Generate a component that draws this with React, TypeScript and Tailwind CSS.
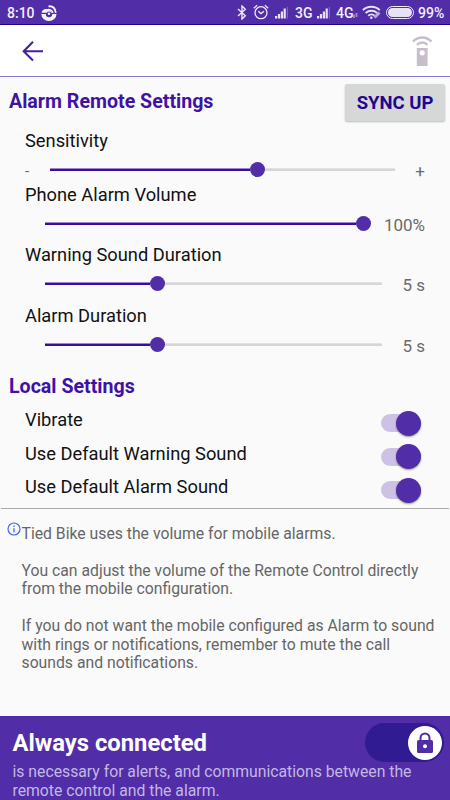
const sliders = [
  { label: 'Sensitivity', percent: 60, min: '-', value: '+', box: 'h-[26px]', track: 'ml-[50px] w-[345px]' },
  { label: 'Phone Alarm Volume', percent: 94.6, value: '100%', box: 'h-[32px]', track: 'ml-[45px] w-[337px]', full: true },
  { label: 'Warning Sound Duration', percent: 33.3, value: '5 s', box: 'h-[33px]', track: 'ml-[45px] w-[337px]' },
  { label: 'Alarm Duration', percent: 33.3, value: '5 s', box: 'h-[31px]', track: 'ml-[45px] w-[337px]' }
];

const toggles = ['Vibrate', 'Use Default Warning Sound', 'Use Default Alarm Sound'];

function SignalIcon() {
  return (
    <svg width="13" height="12" viewBox="0 0 13 12" fill="#e9e2f6">
      <rect x="0" y="9" width="2.2" height="2.5" />
      <rect x="2.9" y="7" width="2.2" height="4.5" />
      <rect x="5.8" y="4.5" width="2.2" height="7" />
      <rect x="8.6" y="1.5" width="2.2" height="10" />
      <rect x="11.8" y="0" width="1.2" height="11.5" opacity=".3" />
    </svg>
  );
}

function StatusBar() {
  return (
    <div className="flex h-[25px] items-center border-b border-[#1d0093] bg-[#512da8] pl-[7px] text-[14px] font-medium leading-none text-[#f3effa]">
      <span className="w-[34px] pt-[2px]">8:10</span>
      <svg width="16" height="16" viewBox="0 0 16 16" className="mt-[1px]">
        <path d="M.3 9h4.500a3.200 3.200 0 0 0 6.400 0h4.300A7.400 6.800 0 0 1 .3 9z" fill="#f6f3fc" />
        <path d="M.5 7.800C1 5.500 2.700 4 5 4h2l4.500 3.800z" fill="#f6f3fc" />
        <path d="M7.500 1.300c4.200-.4 6.800 2.200 7.300 6.500" fill="none" stroke="#f6f3fc" strokeWidth="1.800" />
        <path d="M7 4.500c2.700 0 4.300 1.200 5 3.300" fill="none" stroke="#f6f3fc" strokeWidth="1.400" />
        <circle cx="8" cy="8.700" r="2.200" fill="#512da8" />
        <circle cx="8" cy="8.700" r="1.200" fill="#f6f3fc" />
      </svg>
      <div className="ml-[180px] flex items-center">
        <svg width="10" height="15" viewBox="0 0 10 15" fill="none" stroke="#eee8f9" strokeWidth="1.4">
          <path d="M1 4l7.3 6.8L5 14V1l3.3 3.2L1 11" />
        </svg>
        <svg width="16" height="16" viewBox="0 0 16 16" className="ml-[6px]" fill="none" stroke="#eee8f9" strokeWidth="1.3">
          <circle cx="8" cy="8.7" r="6" />
          <path d="M.8 4.200l3.300-2.900M15.200 4.200l-3.300-2.900M5.300 7.300L8 9.600l3-2.300" />
        </svg>
        <div className="ml-[6px] mt-[1px]"><SignalIcon /></div>
        <span className="ml-[7px] w-[22px] pt-[2px]">3G</span>
        <div className="mt-[1px]"><SignalIcon /></div>
        <span className="ml-[6px] w-[17px] pt-[2px]">4G</span>
        <svg width="5" height="5" viewBox="0 0 5 5" className="mt-[7px]" fill="#9884cf">
          <path d="M0 1.500h2V5H0zM2.500 0H4.500v4h-2z" />
        </svg>
        <svg width="19" height="15" viewBox="0 0 19 15" className="ml-[4px]" fill="none" stroke="#e9e2f6" strokeWidth="1.8">
          <path d="M.8 5.2c4.8-4.6 12.3-4.6 17 0M3.6 8c3.3-3 8.3-3 11.6 0M6.2 10.7c1.9-1.6 4.6-1.6 6.4 0" />
          <circle cx="9.3" cy="12.7" r="1.3" fill="#e9e2f6" stroke="none" />
          <path d="M12.500 12.500l5-5" stroke="#b9a8de" strokeWidth="3" />
        </svg>
        <div className="ml-[5px] h-[13px] w-[28px] rounded-full border border-[#eee8f9] p-[1px]">
          <div className="h-full rounded-full bg-[#e9e2f6]" />
        </div>
        <span className="ml-[4px] pt-[2px]">99%</span>
      </div>
    </div>
  );
}

function Header() {
  return (
    <header className="flex h-[52px] items-center justify-between border-b border-[#8b7bc9] bg-white pl-[19px] pr-[17px]">
      <svg width="28" height="28" viewBox="0 0 28 28" fill="none" stroke="#4520a3" strokeWidth="2.1">
        <path d="M24 14.200H5M14 4.700L4.700 14.200l9.300 9.300" />
      </svg>
      <svg width="21" height="32" viewBox="0 0 21 32" fill="none">
        <path d="M1 6.600C6 1.100 14 1.100 19.500 6.600M4.900 9.800c3-3 7.600-3 10.600 0" stroke="#c6bec8" strokeWidth="2.400" />
        <path d="M4.800 13h10.800v18H4.800zM10.200 15.200a2.600 2.600 0 1 0 0 5.200 2.600 2.600 0 0 0 0-5.200z" fill="#c6bec8" fillRule="evenodd" />
      </svg>
    </header>
  );
}

function SliderSetting({ label, percent, min, value, box, track, full }: {
  label: string;
  percent: number;
  min?: string;
  value: string;
  box: string;
  track: string;
  full?: boolean;
}) {
  return (
    <div>
      <div className="h-[28px] pl-[25px] text-[18.3px] leading-[28px] text-[#111]">{label}</div>
      <div className={`relative flex items-start ${box}`}>
        {min && <span className="absolute left-[25px] top-[6px] text-[15px] leading-[20px] text-[#666]">{min}</span>}
        <div className={`mt-[7px] flex h-[15px] shrink-0 items-center ${track}`}>
          <div className="h-[3px] border-t border-[#9c86d1] bg-[#3a0ca3]" style={{ width: `calc(${percent}% - 7.5px)` }} />
          <div className="size-[15px] shrink-0 rounded-full bg-[#512da8]" />
          {!full && <div className="h-[3px] flex-1 border-t border-[#e2e2e2] bg-[#d6d6d6]" />}
        </div>
        <span className="mt-[6px] flex-1 pr-[25px] text-right text-[17px] leading-[20px] text-[#6b6b6b]">{value}</span>
      </div>
    </div>
  );
}

function Toggle() {
  return (
    <div className="mt-[7px] flex h-[18px] w-[38px] items-center justify-end rounded-full bg-[#cdc2e5]">
      <div className="-mr-[2px] size-[25px] shrink-0 rounded-full bg-[#512da8] shadow-[0_1px_2px_rgba(0,0,0,0.4)]" />
    </div>
  );
}

function Footer() {
  return (
    <footer className="h-[84px] bg-[#512da8] pl-[12.5px] pr-[6px]">
      <div className="flex h-[47px] items-start justify-between">
        <h2 className="mt-[11px] text-[23.8px] font-bold leading-[32px] text-white">Always connected</h2>
        <div className="mt-[7px] flex h-[39px] w-[79px] items-center justify-end rounded-full bg-[#311b92] pr-[2px]">
          <div className="flex size-[34px] items-center justify-center rounded-full bg-white">
            <svg width="18" height="22" viewBox="0 0 18 22">
              <path d="M4.500 9V6a4.500 4.500 0 0 1 9 0v3" fill="none" stroke="#512da8" strokeWidth="2" />
              <rect x="1" y="8" width="16" height="13" rx="1.500" fill="#512da8" />
              <circle cx="9" cy="14.300" r="2" fill="#fff" />
            </svg>
          </div>
        </div>
      </div>
      <p className="text-[15.75px] leading-[18.500px] text-[#c3b8e2]">
        is necessary for alerts, and communications between the
        <br />
        remote control and the alarm.
      </p>
    </footer>
  );
}

export default function App() {
  return (
    <div className="flex h-[800px] w-[450px] flex-col overflow-hidden bg-[#fafafa] font-[Roboto,sans-serif]">
      <StatusBar />
      <Header />

      <main className="flex-1">
        <div className="flex h-[50px] items-start justify-between pl-[9px] pr-[5px]">
          <h2 className="text-[19.6px] font-bold leading-[49px] text-[#3f12a5]">Alarm Remote Settings</h2>
          <button className="mt-[7px] h-[37px] w-[100px] rounded-[2px] bg-[#d6d7d7] pt-[2px] text-[18.500px] font-bold text-[#22068f] shadow-[0_1px_2px_rgba(0,0,0,0.25)]">
            SYNC UP
          </button>
        </div>

        {sliders.map((slider) => (
          <SliderSetting key={slider.label} {...slider} />
        ))}

        <h2 className="h-[46px] pl-[9px] pt-[12px] text-[19.6px] font-bold leading-[28px] text-[#3f12a5]">Local Settings</h2>

        {toggles.map((label) => (
          <div key={label} className="flex h-[33.700px] items-start justify-between pl-[25px] pr-[31px]">
            <span className="text-[18.3px] leading-[26px] text-[#111]">{label}</span>
            <Toggle />
          </div>
        ))}

        <div className="mx-[1px] h-px bg-[#aaa]" />

        <div className="flex pl-[7px] pt-[13px]">
          <svg width="14" height="14" viewBox="0 0 14 14" className="shrink-0" fill="none" stroke="#3b6cf0">
            <circle cx="7" cy="7" r="6" strokeWidth="1.200" />
            <path d="M7 6.200v4M7 3.600v1.300" strokeWidth="1.300" />
          </svg>
          <div className="whitespace-pre-line pl-[0.5px] pt-[3px] text-[15.75px] leading-[18.400px] text-[#666]">
            {'Tied Bike uses the volume for mobile alarms.\n\nYou can adjust the volume of the Remote Control directly\nfrom the mobile configuration.\n\nIf you do not want the mobile configured as Alarm to sound\nwith rings or notifications, remember to mute the call\nsounds and notifications.'}
          </div>
        </div>
      </main>

      <Footer />
    </div>
  );
}
